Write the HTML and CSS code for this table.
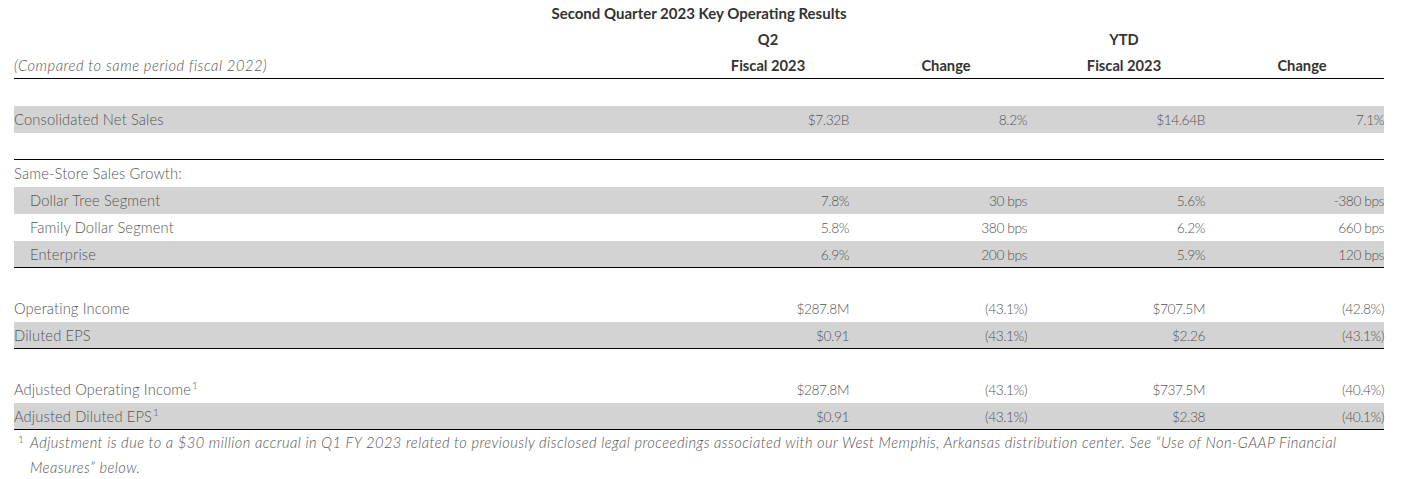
FILE: index.html
```html
<!DOCTYPE html>
<html lang="en">
<head>
<meta charset="utf-8">
<title>Second Quarter 2023 Key Operating Results</title>
<link rel="stylesheet" href="styles.css">
</head>
<body>
<div class="results">
  <div class="title">Second Quarter 2023 Key Operating Results</div>
  <div class="row head">
    <div class="label"></div>
    <div class="hcell">Q2</div>
    <div class="hcell"></div>
    <div class="hcell">YTD</div>
    <div class="hcell"></div>
  </div>
  <div class="row head ruled">
    <div class="label note">(Compared to same period fiscal 2022)</div>
    <div class="hcell">Fiscal 2023</div>
    <div class="hcell">Change</div>
    <div class="hcell">Fiscal 2023</div>
    <div class="hcell">Change</div>
  </div>

  <div class="row"></div>
  <div class="row shade">
    <div class="label">Consolidated Net Sales</div>
    <div class="num">$7.32B</div><div class="num">8.2%</div><div class="num">$14.64B</div><div class="num">7.1%</div>
  </div>
  <div class="row ruled"></div>

  <div class="row">
    <div class="label">Same-Store Sales Growth:</div>
  </div>
  <div class="row shade">
    <div class="label sub">Dollar Tree Segment</div>
    <div class="num">7.8%</div><div class="num">30 bps</div><div class="num">5.6%</div><div class="num">-380 bps</div>
  </div>
  <div class="row">
    <div class="label sub">Family Dollar Segment</div>
    <div class="num">5.8%</div><div class="num">380 bps</div><div class="num">6.2%</div><div class="num">660 bps</div>
  </div>
  <div class="row shade ruled">
    <div class="label sub">Enterprise</div>
    <div class="num">6.9%</div><div class="num">200 bps</div><div class="num">5.9%</div><div class="num">120 bps</div>
  </div>

  <div class="row"></div>
  <div class="row">
    <div class="label">Operating Income</div>
    <div class="num">$287.8M</div><div class="num">(43.1%)</div><div class="num">$707.5M</div><div class="num">(42.8%)</div>
  </div>
  <div class="row shade ruled">
    <div class="label">Diluted EPS</div>
    <div class="num">$0.91</div><div class="num">(43.1%)</div><div class="num">$2.26</div><div class="num">(43.1%)</div>
  </div>

  <div class="row"></div>
  <div class="row">
    <div class="label">Adjusted Operating Income<sup class="mark">1</sup></div>
    <div class="num">$287.8M</div><div class="num">(43.1%)</div><div class="num">$737.5M</div><div class="num">(40.4%)</div>
  </div>
  <div class="row shade ruled">
    <div class="label">Adjusted Diluted EPS<sup class="mark">1</sup></div>
    <div class="num">$0.91</div><div class="num">(43.1%)</div><div class="num">$2.38</div><div class="num">(40.1%)</div>
  </div>

  <div class="footnote">
    <span class="fn-mark">1</span>
    <p class="fn-text">Adjustment is due to a $30 million accrual in Q1 FY 2023 related to previously disclosed legal proceedings associated with our West Memphis, Arkansas distribution center. See “Use of Non-GAAP Financial<br>Measures” below.</p>
  </div>
</div>
</body>
</html>
```

FILE: styles.css
```css
html, body {
  margin: 0;
  padding: 0;
  background: #ffffff;
}

body {
  font-family: Lato, "Noto Sans", "Liberation Sans", sans-serif;
  font-size: 14.7px;
  font-weight: 300;
  color: #555555;
}

.results {
  width: 1370px;
  margin-left: 14px;
}

.title {
  height: 26px;
  line-height: 26px;
  text-align: center;
  font-weight: 700;
  font-size: 15px;
  color: #333333;
}

.row {
  display: grid;
  grid-template-columns: 658px repeat(4, 178px);
  height: 27px;
  line-height: 27px;
  box-sizing: border-box;
}

.row.head {
  height: 26px;
  line-height: 26px;
}

.row.head.ruled {
  height: 27px;
  line-height: 26px;
}

.ruled {
  border-bottom: 1px solid #000000;
}

.shade {
  background: #d3d3d3;
}

.label {
  white-space: nowrap;
  letter-spacing: 0.15px;
}

.label.sub {
  padding-left: 16px;
}

.note {
  font-style: italic;
  letter-spacing: 0.55px;
}

.hcell {
  padding-left: 14px;
  text-align: center;
  font-weight: 700;
  font-size: 14.7px;
  color: #333333;
}

.num {
  text-align: right;
  padding-right: 1px;
  white-space: nowrap;
  font-size: 13.8px;
  letter-spacing: -0.45px;
}

.row .num:last-child {
  padding-right: 0;
}

.mark {
  font-size: 10px;
  line-height: 0;
  vertical-align: 6px;
  margin-left: 1px;
  letter-spacing: 0;
}

.footnote {
  display: flex;
  line-height: 25px;
}

.fn-mark {
  width: 12px;
  padding-left: 4px;
  font-size: 10px;
  line-height: 18px;
  flex: none;
}

.fn-text {
  margin: 0;
  font-style: italic;
  font-size: 14.7px;
  letter-spacing: 0.44px;
}
```
